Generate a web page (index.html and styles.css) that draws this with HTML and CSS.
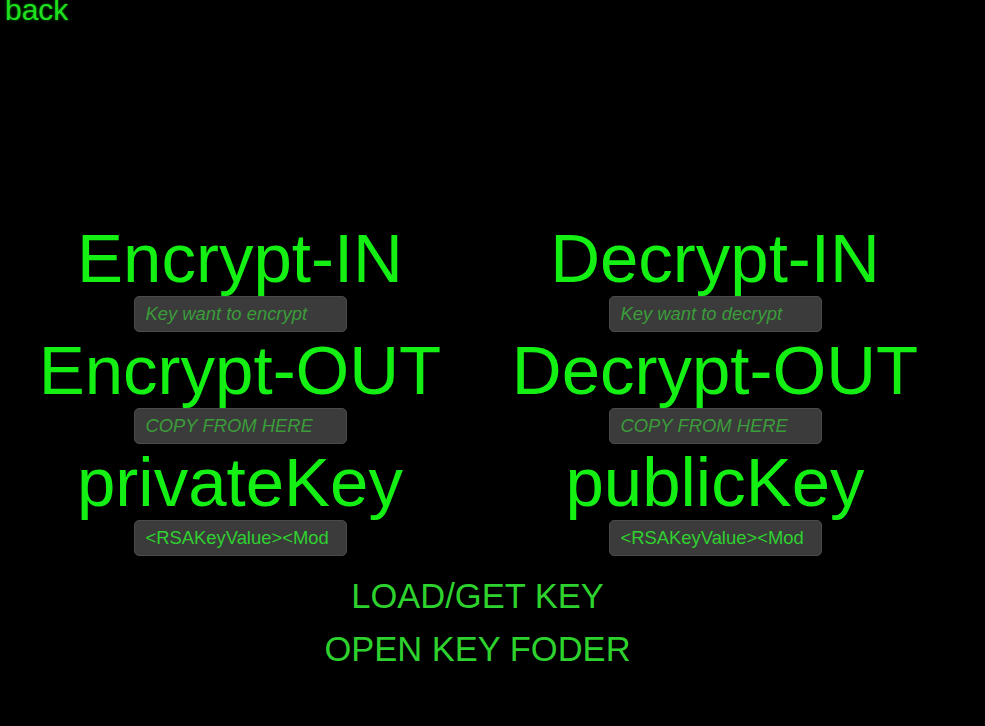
FILE: index.html
```html
<!DOCTYPE html>
<html>
<head>
<meta charset="utf-8">
<link rel="stylesheet" href="styles.css">
</head>
<body>
<header class="topbar"><a class="back">back</a></header>
<main class="panel">
  <section class="col">
    <h2 class="title">Encrypt-IN</h2>
    <input class="field" placeholder="Key want to encrypt">
    <h2 class="title">Encrypt-OUT</h2>
    <input class="field" placeholder="COPY FROM HERE">
    <h2 class="title">privateKey</h2>
    <input class="field value" value="&lt;RSAKeyValue&gt;&lt;Mod">
  </section>
  <section class="col">
    <h2 class="title">Decrypt-IN</h2>
    <input class="field" placeholder="Key want to decrypt">
    <h2 class="title">Decrypt-OUT</h2>
    <input class="field" placeholder="COPY FROM HERE">
    <h2 class="title">publicKey</h2>
    <input class="field value" value="&lt;RSAKeyValue&gt;&lt;Mod">
  </section>
</main>
<nav class="actions">
  <button class="action">LOAD/GET KEY</button>
  <button class="action">OPEN KEY FODER</button>
</nav>
</body>
</html>
```
FILE: styles.css
```css
html, body {
  margin: 0;
  padding: 0;
  background: #000;
  height: 100%;
  overflow: hidden;
}
body {
  font-family: "Liberation Sans", Arial, sans-serif;
}
.topbar {
  height: 20px;
  padding-left: 5px;
}
.back {
  display: block;
  font-size: 30px;
  line-height: 20px;
  color: #1ee01e;
  text-shadow: 0 0 3px #0c7a0c;
}
.panel {
  display: grid;
  grid-template-columns: 480px 470px;
  padding-top: 201px;
}
.col {
  display: flex;
  flex-direction: column;
  align-items: center;
}
.title {
  margin: 0;
  font-weight: normal;
  font-size: 69px;
  line-height: 75px;
  color: #14f014;
  white-space: nowrap;
}
.field {
  box-sizing: border-box;
  width: 213px;
  height: 36px;
  margin: 0 0 1px;
  padding: 0 8px 1px 11px;
  border: 1px solid #4a4a4a;
  border-radius: 5px;
  background: #3b3b3b;
  font-family: "Liberation Sans", Arial, sans-serif;
  font-size: 18.4px;
  color: #2fd02f;
  outline: none;
}
.field::placeholder {
  color: #3a9d3a;
  font-style: italic;
  opacity: 1;
}
.actions {
  width: 955px;
  display: flex;
  flex-direction: column;
  align-items: center;
  padding-top: 13px;
}
.action {
  background: none;
  border: none;
  padding: 0;
  margin: 0;
  font-family: "Liberation Sans", Arial, sans-serif;
  font-size: 34.5px;
  line-height: 53px;
  color: #2ed22e;
  cursor: pointer;
}
```
